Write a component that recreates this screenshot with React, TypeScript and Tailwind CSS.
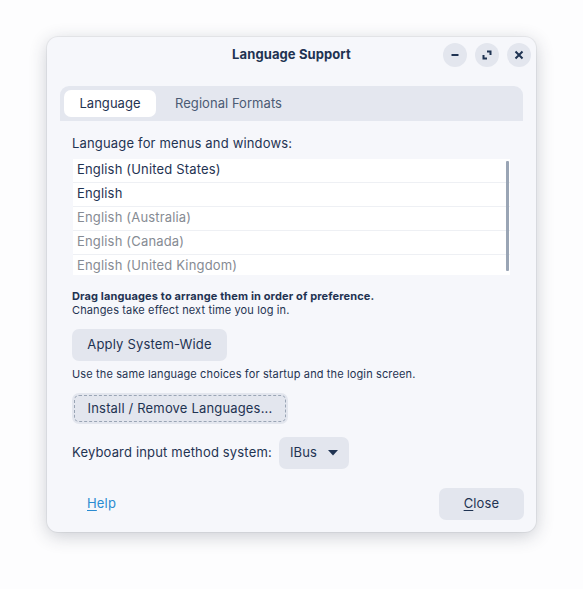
import React from "react";

const rows = [
  { t: "English (United States)", muted: false },
  { t: "English", muted: false },
  { t: "English (Australia)", muted: true },
  { t: "English (Canada)", muted: true },
  { t: "English (United Kingdom)", muted: true },
];

export default function App() {
  return (
    <div
      className="w-[583px] h-[589px] bg-[#fdfdfe] pt-[37px] pl-[47px]"
      style={{ fontFamily: "Inter, 'Noto Sans', sans-serif" }}
    >
      <div className="w-[489px] h-[495px] rounded-[11px] bg-[#f6f7fb] shadow-[0_4px_18px_rgba(40,50,70,0.24),0_0_0_1px_rgba(40,50,70,0.06)] flex flex-col text-[#1f3352] tracking-[0.17px]">
        {/* header */}
        <div className="relative h-[36px] flex items-center justify-center">
          <div className="text-[13px] font-bold tracking-[0.1px]">Language Support</div>
          <div className="absolute right-[5px] top-[6px] flex gap-[8px]">
            <div className="w-[24px] h-[24px] rounded-full bg-[#e3e6ee] flex items-center justify-center">
              <svg width="10" height="10" viewBox="0 0 10 10">
                <rect x="1.5" y="4" width="7" height="2" fill="#1f3352" />
              </svg>
            </div>
            <div className="w-[24px] h-[24px] rounded-full bg-[#e3e6ee] flex items-center justify-center">
              <svg width="10" height="10" viewBox="0 0 10 10" fill="none" stroke="#1f3352" strokeWidth="2">
                <path d="M5 1.5 H8.5 V5" />
                <path d="M1.5 5 V8.5 H5" />
              </svg>
            </div>
            <div className="w-[24px] h-[24px] rounded-full bg-[#e3e6ee] flex items-center justify-center">
              <svg width="10" height="10" viewBox="0 0 10 10" fill="none" stroke="#1f3352" strokeWidth="2">
                <path d="M1.5 1.5 L8.5 8.5 M8.5 1.5 L1.5 8.5" />
              </svg>
            </div>
          </div>
        </div>

        {/* tabs */}
        <div className="mt-[13px] mx-[13px] h-[35px] rounded-t-[9px] bg-[#e4e7ef] flex items-center px-[4px] tracking-[0.05px]">
          <div className="h-[27px] w-[92px] rounded-[7px] bg-white flex items-center justify-center text-[13px] text-[#1f3352]">
            Language
          </div>
          <div className="h-[27px] ml-[4px] px-[15px] flex items-center text-[13px] text-[#4b5b74]">
            Regional Formats
          </div>
        </div>

        {/* content */}
        <div className="pl-[25px] pr-[26px] flex flex-col">
          <div className="mt-[15px] h-[16px] flex items-center text-[13px]">Language for menus and windows:</div>
          <div className="relative mt-[7px] ml-[1px] h-[116px] bg-white overflow-hidden">
            {rows.map((r, i) => (
              <div
                key={i}
                className={
                  "h-[24px] flex items-center pl-[4px] pb-[1px] text-[13px] border-b border-[#eef0f4] " +
                  (r.muted ? "text-[#868b93]" : "text-[#1f3352]")
                }
              >
                {r.t}
              </div>
            ))}
            <div className="absolute right-[1px] top-[2px] w-[3px] h-[110px] bg-[#9aa5b5] rounded-[1px]" />
          </div>

          <div className="mt-[14px] text-[11px] leading-[14px] font-bold tracking-[0.13px]">
            Drag languages to arrange them in order of preference.
          </div>
          <div className="text-[11px] leading-[14px] tracking-[0.13px]">Changes take effect next time you log in.</div>

          <div className="mt-[12px] w-[155px] h-[32px] rounded-[7px] bg-[#e3e6ee] flex items-center justify-center text-[13px]">
            Apply System-Wide
          </div>
          <div className="mt-[6px] h-[14px] text-[11px] leading-[14px] tracking-[0.13px]">
            Use the same language choices for startup and the login screen.
          </div>

          <div className="mt-[12px] w-[216px] h-[31px] rounded-[7px] bg-[#e3e6ee] p-[2px]">
            <div className="w-full h-full rounded-[5px] border border-dashed border-[#9aa5b5] flex items-center justify-center text-[13px]">
              Install / Remove Languages...
            </div>
          </div>

          <div className="mt-[13px] flex items-center">
            <div className="text-[13px]">Keyboard input method system:</div>
            <div className="ml-[7px] w-[70px] h-[32px] rounded-[7px] bg-[#e3e6ee] flex items-center pl-[11px] text-[13px]">
              IBus
              <svg className="ml-[11px]" width="10" height="6" viewBox="0 0 10 6">
                <path d="M0 0 H10 L5 5.5 Z" fill="#1f3352" />
              </svg>
            </div>
          </div>
        </div>

        {/* footer */}
        <div className="mt-[19px] pl-[27px] pr-[12px] flex items-center justify-between">
          <div className="text-[13px] text-[#2a8bd1] pl-[13px]">
            <span className="underline underline-offset-2">H</span>elp
          </div>
          <div className="w-[85px] h-[32px] rounded-[7px] bg-[#e3e6ee] flex items-center justify-center text-[13px]">
            <span>
              <span className="underline underline-offset-2">C</span>lose
            </span>
          </div>
        </div>
      </div>
    </div>
  );
}
